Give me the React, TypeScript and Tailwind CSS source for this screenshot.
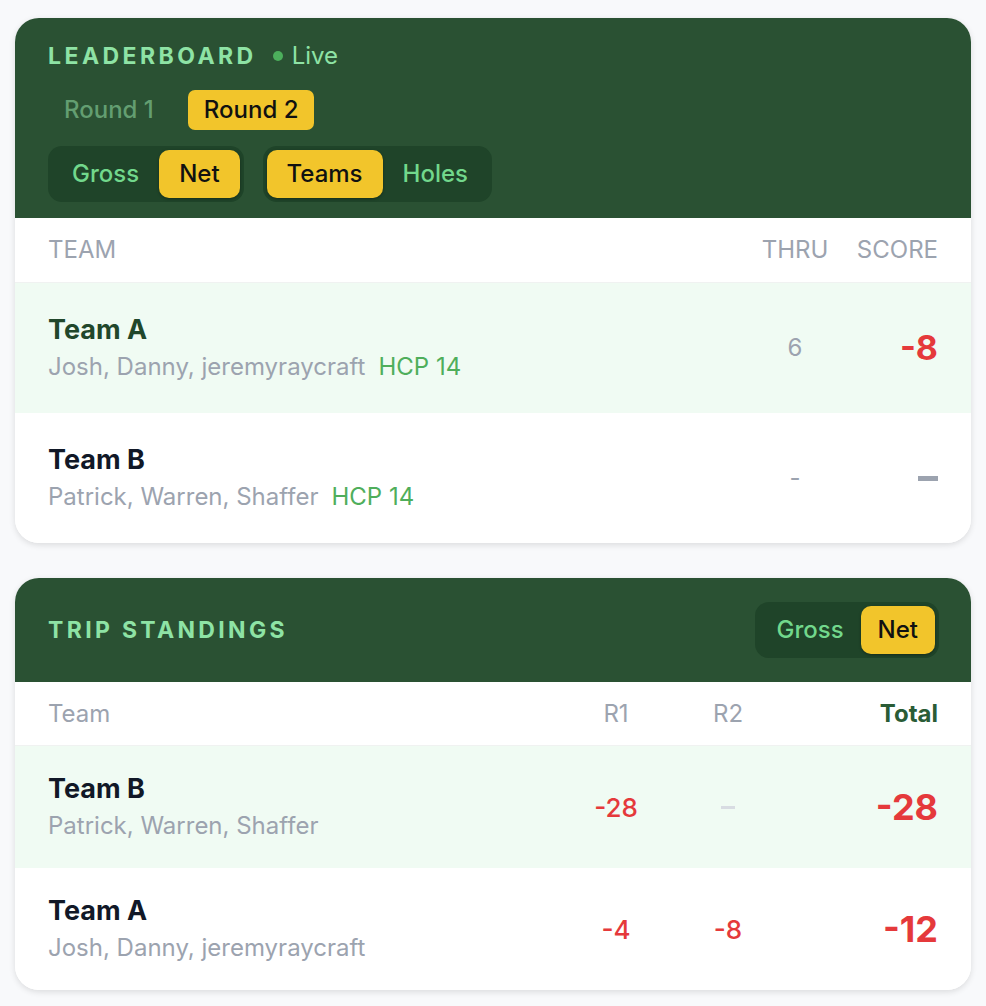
import { useState } from "react";

type TeamRow = {
  name: string;
  players: string;
  hcp?: number;
  thru?: string;
  score?: string;
};

type StandingRow = {
  name: string;
  players: string;
  r1: string;
  r2: string;
  total: string;
};

const leaderboard: TeamRow[] = [
  { name: "Team A", players: "Josh, Danny, jeremyraycraft", hcp: 14, thru: "6", score: "-8" },
  { name: "Team B", players: "Patrick, Warren, Shaffer", hcp: 14 },
];

const standings: StandingRow[] = [
  { name: "Team B", players: "Patrick, Warren, Shaffer", r1: "-28", r2: "", total: "-28" },
  { name: "Team A", players: "Josh, Danny, jeremyraycraft", r1: "-4", r2: "-8", total: "-12" },
];

function Segmented({
  options,
  value,
  onChange,
  compact = false,
}: {
  options: string[];
  value: string;
  onChange: (v: string) => void;
  compact?: boolean;
}) {
  return (
    <div className="flex rounded-[14px] bg-[#1f4429] p-[4px]">
      {options.map((opt) => {
        const active = opt === value;
        const pad = compact ? "px-[17px]" : "px-[20px]";
        return (
          <button
            key={opt}
            type="button"
            onClick={() => onChange(opt)}
            className={
              active
                ? `h-[48px] rounded-[10px] bg-[#f2c52b] ${pad} text-[24px] font-medium text-[#111] shadow-[0_1px_3px_rgba(0,0,0,0.35)]`
                : `h-[48px] rounded-[10px] ${pad} text-[24px] font-medium text-[#72d88c]`
            }
          >
            {opt}
          </button>
        );
      })}
    </div>
  );
}

function Leaderboard() {
  const [round, setRound] = useState("Round 2");
  const [mode, setMode] = useState("Net");
  const [view, setView] = useState("Teams");

  return (
    <div className="overflow-hidden rounded-[24px] bg-white shadow-[0_2px_6px_rgba(0,0,0,0.12)]">
      <div className="bg-[#2a5133] px-[33px] pb-[16px] pt-[24px]">
        <div className="flex h-[28px] items-center gap-[16px]">
          <h2 className="text-[23px] font-bold tracking-[0.15em] text-[#8ee3a5]">LEADERBOARD</h2>
          <span className="flex items-center gap-[9px] text-[24px] text-[#8ee3a5]">
            <span className="h-[10px] w-[10px] rounded-full bg-[#4caf5c]" />
            Live
          </span>
        </div>
        <div className="mt-[20px] flex h-[40px] gap-[18px]">
          {["Round 1", "Round 2"].map((r) => (
            <button
              key={r}
              type="button"
              onClick={() => setRound(r)}
              className={
                r === round
                  ? "rounded-[7px] bg-[#f2c52b] px-[16px] text-[24px] font-medium text-[#111]"
                  : "rounded-[7px] px-[16px] text-[24px] font-medium text-[#639e71]"
              }
            >
              {r}
            </button>
          ))}
        </div>
        <div className="mt-[16px] flex gap-[19px]">
          <Segmented options={["Gross", "Net"]} value={mode} onChange={setMode} />
          <Segmented options={["Teams", "Holes"]} value={view} onChange={setView} />
        </div>
      </div>

      <div className="flex h-[65px] items-center border-b border-[#f0f2f1] px-[33px] text-[24px] text-[#9ca3af]">
        <span className="flex-1">TEAM</span>
        <span className="w-[80px] text-center">THRU</span>
        <span className="w-[103px] text-right">SCORE</span>
      </div>

      {leaderboard.map((t, i) => (
        <div
          key={t.name}
          className={`flex items-center px-[33px] py-[32px] ${i === 0 ? "bg-[#f0fbf3]" : "bg-white"}`}
        >
          <div className="flex-1">
            <div
              className={`text-[27px] font-bold leading-[30px] ${i === 0 ? "text-[#21472b]" : "text-[#111827]"}`}
            >
              {t.name}
            </div>
            <div className="mt-[8px] flex gap-[13px] text-[24px] leading-[28px]">
              <span className="text-[#9ca3af]">{t.players}</span>
              <span className="text-[#4fae5b]">HCP {t.hcp}</span>
            </div>
          </div>
          <span className="w-[80px] text-center text-[24px] text-[#9ca3af]">{t.thru ?? "-"}</span>
          <span className="flex w-[103px] justify-end">
            {t.score ? (
              <span className="text-[34px] font-bold leading-none text-[#e5393b]">{t.score}</span>
            ) : (
              <span className="h-[5px] w-[20px] bg-[#9ca3af]" />
            )}
          </span>
        </div>
      ))}
    </div>
  );
}

function TripStandings() {
  const [mode, setMode] = useState("Net");

  return (
    <div className="overflow-hidden rounded-[24px] bg-white shadow-[0_2px_6px_rgba(0,0,0,0.12)]">
      <div className="flex items-center justify-between bg-[#2a5133] py-[24px] pl-[33px] pr-[32px]">
        <h2 className="text-[23px] font-bold tracking-[0.145em] text-[#8ee3a5]">TRIP STANDINGS</h2>
        <Segmented options={["Gross", "Net"]} value={mode} onChange={setMode} compact />
      </div>

      <div className="flex h-[64px] items-center border-b border-[#f0f2f1] px-[33px] text-[24px] text-[#9ca3af]">
        <span className="flex-1">Team</span>
        <span className="w-[112px] text-center">R1</span>
        <span className="w-[112px] text-center">R2</span>
        <span className="w-[154px] text-right font-bold text-[#2a5c36]">Total</span>
      </div>

      {standings.map((t, i) => (
        <div
          key={t.name}
          className={`flex items-center px-[33px] py-[28px] ${i === 0 ? "bg-[#f0fbf3]" : "bg-white"}`}
        >
          <div className="flex-1">
            <div className="text-[27px] font-bold leading-[30px] text-[#111827]">{t.name}</div>
            <div className="mt-[8px] text-[24px] leading-[28px] text-[#9ca3af]">{t.players}</div>
          </div>
          <span className="w-[112px] text-center text-[26px] font-medium text-[#e5393b]">{t.r1}</span>
          <span className="flex w-[112px] justify-center">
            {t.r2 ? (
              <span className="text-[26px] font-medium text-[#e5393b]">{t.r2}</span>
            ) : (
              <span className="h-[3px] w-[14px] bg-[#d8dce2]" />
            )}
          </span>
          <span className="w-[154px] text-right text-[36px] font-bold leading-none text-[#e5393b]">
            {t.total}
          </span>
        </div>
      ))}
    </div>
  );
}

export default function App() {
  return (
    <div
      className="min-h-[1006px] bg-[#f8f9fb] px-[15px] pb-[16px] pt-[18px]"
      style={{ fontFamily: "Inter, 'Liberation Sans', sans-serif" }}
    >
      <div className="flex flex-col gap-[35px]">
        <Leaderboard />
        <TripStandings />
      </div>
    </div>
  );
}
